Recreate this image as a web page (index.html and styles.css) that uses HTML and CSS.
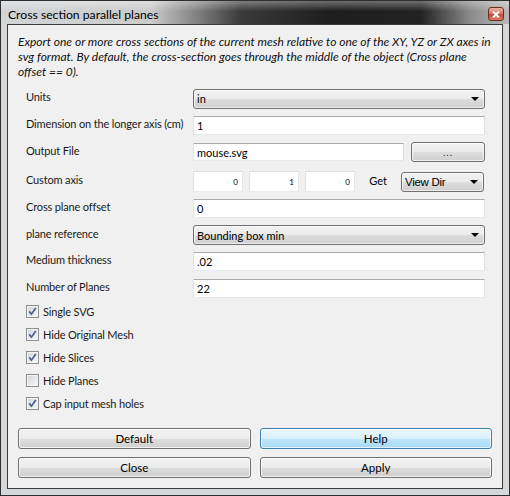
FILE: index.html
```html
<!DOCTYPE html>
<html>
<head>
<meta charset="utf-8">
<link rel="stylesheet" href="styles.css">
</head>
<body>
<div class="window">
  <div class="titlebar">
    <span class="title">Cross section parallel planes</span>
    <span class="close"><svg width="8" height="7" viewBox="0 0 8 7"><path d="M1 0.5 L7 6.5 M7 0.5 L1 6.5" stroke="#fff" stroke-width="2"/></svg></span>
  </div>
  <div class="frame">
    <div class="client">
      <p class="desc">Export one or more cross sections of the current mesh relative to one of the XY, YZ or ZX axes in<br>svg format. By default, the cross-section goes through the middle of the object (Cross plane<br>offset == 0).</p>

      <div class="form">
        <div class="row h19">
          <span class="label">Units</span>
          <div class="ctrl"><div class="combo fill"><span>in</span><i class="arrow"></i></div></div>
        </div>
        <div class="row h20">
          <span class="label">Dimension on the longer axis (cm)</span>
          <div class="ctrl"><div class="input fill">1</div></div>
        </div>
        <div class="row h20">
          <span class="label">Output File</span>
          <div class="ctrl">
            <div class="input fill short">mouse.svg</div>
            <div class="btn browse">...</div>
          </div>
        </div>
        <div class="row h21 custom">
          <span class="label">Custom axis</span>
          <div class="ctrl">
            <div class="spin">0</div>
            <div class="spin">1</div>
            <div class="spin">0</div>
            <span class="get">Get</span>
            <div class="combo viewdir"><span>View Dir</span><i class="arrow"></i></div>
          </div>
        </div>
        <div class="row h19">
          <span class="label">Cross plane offset</span>
          <div class="ctrl"><div class="input fill">0</div></div>
        </div>
        <div class="row h20">
          <span class="label">plane reference</span>
          <div class="ctrl"><div class="combo fill"><span>Bounding box min</span><i class="arrow"></i></div></div>
        </div>
        <div class="row h19">
          <span class="label">Medium thickness</span>
          <div class="ctrl"><div class="input fill">.02</div></div>
        </div>
        <div class="row h20">
          <span class="label">Number of Planes</span>
          <div class="ctrl"><div class="input fill">22</div></div>
        </div>
      </div>

      <div class="checks">
        <div class="check"><span class="box"><svg width="9" height="9" viewBox="0 0 9 9"><path d="M1.2 4.4 L3.4 7.2 L7.8 1" fill="none" stroke="#4b5f8c" stroke-width="1.7"/></svg></span>Single SVG</div>
        <div class="check"><span class="box"><svg width="9" height="9" viewBox="0 0 9 9"><path d="M1.2 4.4 L3.4 7.2 L7.8 1" fill="none" stroke="#4b5f8c" stroke-width="1.7"/></svg></span>Hide Original Mesh</div>
        <div class="check"><span class="box"><svg width="9" height="9" viewBox="0 0 9 9"><path d="M1.2 4.4 L3.4 7.2 L7.8 1" fill="none" stroke="#4b5f8c" stroke-width="1.7"/></svg></span>Hide Slices</div>
        <div class="check"><span class="box"></span>Hide Planes</div>
        <div class="check"><span class="box"><svg width="9" height="9" viewBox="0 0 9 9"><path d="M1.2 4.4 L3.4 7.2 L7.8 1" fill="none" stroke="#4b5f8c" stroke-width="1.7"/></svg></span>Cap input mesh holes</div>
      </div>

      <div class="buttons">
        <div class="btn">Default</div>
        <div class="btn hot">Help</div>
        <div class="btn">Close</div>
        <div class="btn">Apply</div>
      </div>
    </div>
  </div>
</div>
</body>
</html>
```

FILE: styles.css
```css
* { box-sizing: border-box; }
html, body { margin: 0; padding: 0; }
body {
  width: 510px;
  height: 496px;
  overflow: hidden;
  background: #ffffff;
  font-family: Lato, "Open Sans", sans-serif;
  color: #000;
}

.window {
  width: 510px;
  height: 496px;
  border: 1px solid #2e2e2e;
  background: #d5d7d9;
  display: flex;
  flex-direction: column;
}

.titlebar {
  height: 23px;
  flex: none;
  display: flex;
  align-items: center;
  justify-content: space-between;
  padding: 3px 5px 0 7px;
  background:
    linear-gradient(to bottom, rgba(255,255,255,0.35), rgba(255,255,255,0) 45%),
    linear-gradient(to right, #d2d4d6 0px, #cbcbcb 150px, #3a3a3a 240px, #1e1e1e 330px, #222 420px, #8c8c8c 470px, #b8b8b8 508px);
}
.title { font-size: 12.2px; }
.close {
  width: 16px;
  height: 14px;
  border: 1px solid #6e2b20;
  border-radius: 3px;
  background: linear-gradient(#eeb2a2, #d6705b 50%, #c4493a 51%, #d97a63);
  display: flex;
  align-items: center;
  justify-content: center;
}

.frame {
  flex: 1;
  display: flex;
  padding: 0 6px 6px;
}
.client {
  flex: 1;
  border: 1px solid #3a3a3a;
  background: #f0f0f0;
  display: flex;
  flex-direction: column;
  padding: 9px 10px 10px;
}

.desc {
  margin: 0;
  font-style: italic;
  font-size: 12px;
  line-height: 15px;
  white-space: nowrap;
  color: #111;
}

.form {
  margin-top: 10px;
  padding: 0 7px 0 8px;
  display: flex;
  flex-direction: column;
  gap: 7px;
}
.row { display: flex; align-items: center; }
.h19 { height: 19px; }
.h20 { height: 20px; }
.h21 { height: 21px; }
.custom { margin-top: 2px; }
.label {
  width: 167px;
  flex: none;
  font-size: 11px;
  letter-spacing: -0.15px;
  margin-bottom: 4px;
  white-space: nowrap;
  color: #1a1a1a;
}
.ctrl {
  flex: 1;
  height: 100%;
  display: flex;
  align-items: center;
}
.fill { flex: 1; }

.input {
  height: 19px;
  background: #fff;
  border: 1px solid;
  border-color: #abadb3 #dbdfe6 #e3e9ef #e2e3ea;
  padding: 0 3px;
  font-size: 11px;
  display: flex;
  align-items: center;
}
.short { height: 18px; }

.combo {
  height: 20px;
  border: 1px solid #707070;
  border-radius: 3px;
  background: linear-gradient(#f2f2f2, #ebebeb 50%, #dddddd 51%, #cfcfcf);
  box-shadow: inset 0 0 0 1px rgba(255,255,255,0.6);
  display: flex;
  align-items: center;
  justify-content: space-between;
  padding: 0 5px 0 3px;
  font-size: 11px;
}
.arrow {
  width: 0;
  height: 0;
  border-top: 4px solid #000;
  border-left: 4px solid transparent;
  border-right: 4px solid transparent;
}

.spin {
  width: 50px;
  height: 21px;
  background: #fff;
  border: 1px solid;
  border-color: #dcdfe3 #e3e6ea #eaedf0 #e0e3e7;
  margin-right: 6px;
  font-size: 8px;
  display: flex;
  align-items: center;
  justify-content: flex-end;
  padding-right: 4px;
}
.spin:nth-of-type(3) { margin-right: 0; }
.get {
  width: 46px;
  text-align: center;
  font-size: 11px;
  margin-bottom: 2px;
}
.viewdir { width: 83px; height: 20px; font-family: "Liberation Sans", Arial, sans-serif; font-size: 11.5px; letter-spacing: -0.3px; }

.btn {
  height: 20px;
  border: 1px solid #707070;
  border-radius: 3px;
  background: linear-gradient(#f2f2f2, #ebebeb 50%, #dddddd 51%, #cfcfcf);
  box-shadow: inset 0 0 0 1px rgba(255,255,255,0.7);
  font-size: 11.5px;
  display: flex;
  align-items: center;
  justify-content: center;
}
.browse { width: 74px; margin-left: 7px; font-size: 10px; color: #333; letter-spacing: 1px; }
.btn.hot {
  border-color: #3c7fb1;
  background: linear-gradient(#eaf6fd, #d9f0fc 50%, #bee6fd 51%, #a7d9f5);
}

.checks {
  margin-top: 2px;
  padding-left: 8px;
  display: flex;
  flex-direction: column;
}
.check {
  height: 23px;
  display: flex;
  align-items: center;
  gap: 4px;
  font-size: 11px;
  letter-spacing: -0.15px;
  color: #1a1a1a;
}
.box {
  width: 13px;
  height: 13px;
  flex: none;
  border: 1px solid #8e8f8f;
  background: linear-gradient(135deg, #d3d6db, #f7f7f7);
  box-shadow: inset 0 0 0 1px #f4f4f4;
  display: flex;
  align-items: center;
  justify-content: center;
}

.buttons {
  margin-top: auto;
  display: grid;
  grid-template-columns: 1fr 1fr;
  gap: 8px 9px;
}
.buttons .btn { height: 21px; }
```
